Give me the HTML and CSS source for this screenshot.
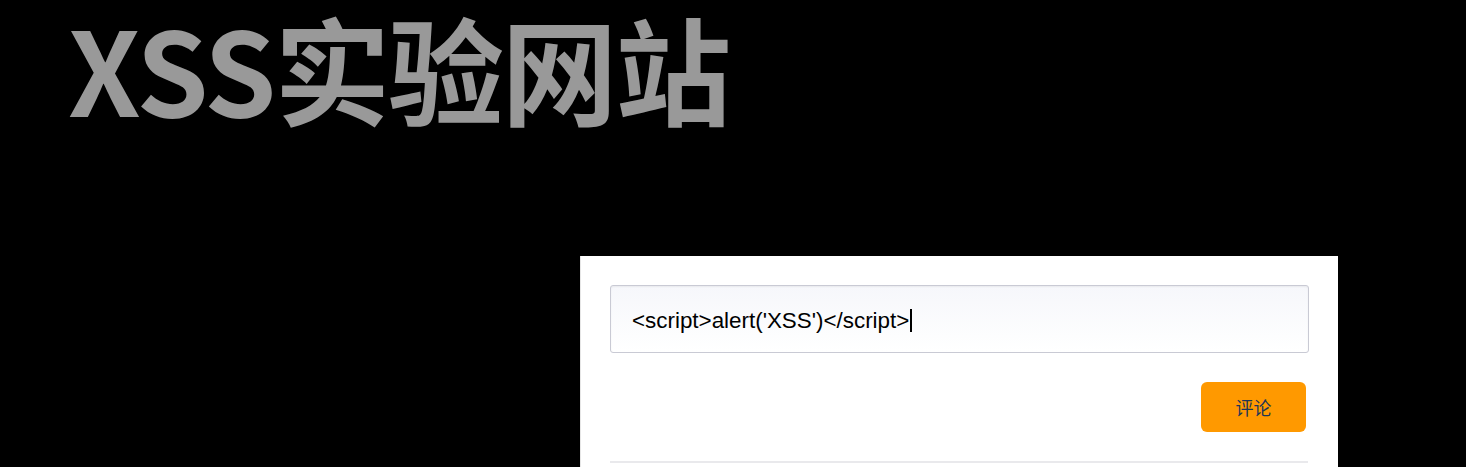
FILE: index.html
```html
<!DOCTYPE html>
<html lang="zh">
<head>
<meta charset="utf-8">
<title>XSS实验网站</title>
<link rel="stylesheet" href="styles.css">
</head>
<body>
<header class="masthead">
  <h1 class="title">XSS实验网站</h1>
</header>
<main class="card">
  <div class="field">
    <span class="field-text">&lt;script&gt;alert('XSS')&lt;/script&gt;</span><span class="caret"></span>
  </div>
  <div class="actions">
    <button class="btn" type="button">评论</button>
  </div>
  <hr class="divider">
</main>
</body>
</html>
```

FILE: styles.css
```css
html, body {
  margin: 0;
  padding: 0;
  background: #000;
  height: 100%;
  overflow: hidden;
}
body {
  font-family: "Liberation Sans", Arial, "Noto Sans CJK SC", sans-serif;
}
.masthead {
  height: 256px;
  padding-left: 68px;
  box-sizing: border-box;
}
.title {
  margin: 0;
  font-family: "Noto Sans CJK SC", sans-serif;
  font-weight: 700;
  font-size: 116px;
  line-height: 132px;
  color: #999;
  white-space: nowrap;
  letter-spacing: -2.3px;
}
.card {
  margin-left: 580px;
  width: 758px;
  box-sizing: border-box;
  background: #fff;
  padding: 29px 29px 0;
  height: 240px;
  border-left: 1px solid #e6e6e6;
}
.field {
  height: 68px;
  box-sizing: border-box;
  border: 1px solid #c9cad4;
  border-radius: 3px;
  background: linear-gradient(#f6f7fb, #fff);
  box-shadow: inset 0 1px 2px rgba(0,0,0,0.06);
  display: flex;
  align-items: center;
  padding: 3px 0 0 21px;
  font-size: 22.4px;
  color: #000;
}
.caret {
  display: inline-block;
  width: 2px;
  height: 23px;
  background: #000;
  margin-left: 1px;
}
.actions {
  display: flex;
  justify-content: flex-end;
  padding: 29px 3px 29px 0;
}
.btn {
  width: 105px;
  height: 50px;
  border: none;
  border-radius: 6px;
  background: #ff9900;
  color: #1d3557;
  font-family: "Noto Sans CJK SC", sans-serif;
  font-size: 18px;
  padding: 0;
}
.divider {
  margin: 0;
  border: none;
  height: 2px;
  background: #e9e9ec;
  margin-right: 1px;
}
```
